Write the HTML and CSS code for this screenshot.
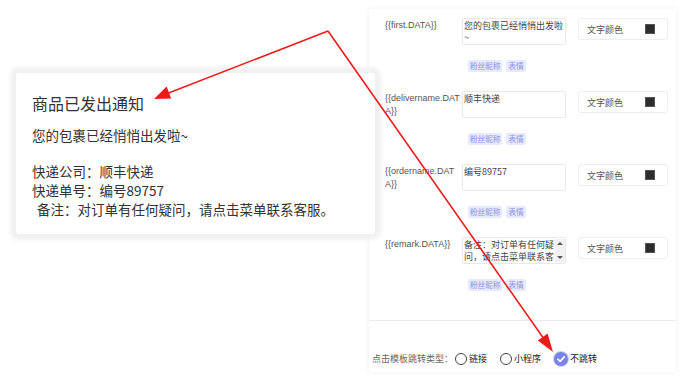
FILE: index.html
```html
<!DOCTYPE html>
<html lang="zh-CN">
<head>
<meta charset="utf-8">
<title>模板消息</title>
<link rel="stylesheet" href="styles.css">
</head>
<body>
<div class="stage">
  <div class="panel">
    <div class="rows">
      <div class="row">
        <div class="label">{{first.DATA}}</div>
        <div class="field">
          <div class="ta">您的包裹已经悄悄出发啦~</div>
          <div class="tags"><span class="tag">粉丝昵称</span><span class="tag">表情</span></div>
        </div>
        <div class="color"><span>文字颜色</span><i class="sw"></i></div>
      </div>
      <div class="row">
        <div class="label">{{delivername.DATA}}</div>
        <div class="field">
          <div class="ta">顺丰快递</div>
          <div class="tags"><span class="tag">粉丝昵称</span><span class="tag">表情</span></div>
        </div>
        <div class="color"><span>文字颜色</span><i class="sw"></i></div>
      </div>
      <div class="row">
        <div class="label">{{ordername.DATA}}</div>
        <div class="field">
          <div class="ta">编号89757</div>
          <div class="tags"><span class="tag">粉丝昵称</span><span class="tag">表情</span></div>
        </div>
        <div class="color"><span>文字颜色</span><i class="sw"></i></div>
      </div>
      <div class="row">
        <div class="label">{{remark.DATA}}</div>
        <div class="field">
          <div class="ta ta-scroll">
            <div class="ta-text">备注：对订单有任何疑问，请点击菜单联系客服。</div>
            <div class="sbar"><span class="up"></span><span class="down"></span></div>
          </div>
          <div class="tags"><span class="tag">粉丝昵称</span><span class="tag">表情</span></div>
        </div>
        <div class="color"><span>文字颜色</span><i class="sw"></i></div>
      </div>
    </div>
    <div class="footer">
      <span class="ftitle">点击模板跳转类型：</span>
      <label class="radio"><i class="dot"></i>链接</label>
      <label class="radio"><i class="dot"></i>小程序</label>
      <label class="radio on"><i class="dot"><svg viewBox="0 0 14 14" width="14" height="14"><path d="M3.8 7.2 L6.1 9.4 L10.3 4.9" fill="none" stroke="#fff" stroke-width="1.6" stroke-linecap="round" stroke-linejoin="round"/></svg></i>不跳转</label>
    </div>
  </div>

  <div class="card">
    <h1 class="ctitle">商品已发出通知</h1>
    <p class="cfirst">您的包裹已经悄悄出发啦~</p>
    <div class="cbody">
      <div>快递公司：<span class="val">顺丰快递</span></div>
      <div>快递单号：<span class="val">编号89757</span></div>
      <div class="remark">备注：对订单有任何疑问，请点击菜单联系客服。</div>
    </div>
  </div>

  <svg class="arrows" viewBox="0 0 700 379" width="700" height="379">
    <line x1="328" y1="31" x2="166" y2="94" stroke="#ee1b1b" stroke-width="1.6"/>
    <polygon points="154,99 171.2,98.4 166.6,86.6" fill="#ee1b1b"/>
    <line x1="328" y1="31" x2="544" y2="339" stroke="#ee1b1b" stroke-width="1.6"/>
    <polygon points="553,352 547.6,333.6 537.8,340.6" fill="#ee1b1b"/>
  </svg>
</div>
</body>
</html>
```

FILE: styles.css
```css
* { box-sizing: border-box; }
html, body { margin: 0; padding: 0; background: #fff; }
body {
  font-family: "Liberation Sans", "Noto Sans CJK SC", sans-serif;
  color: #333;
}
.stage {
  position: relative;
  width: 700px;
  height: 379px;
  overflow: hidden;
  padding: 9px 0 0 369px;
}
.panel {
  width: 307px;
  height: 363px;
  background: #fff;
  box-shadow: 0 0 5px rgba(0,0,0,0.08);
  display: flex;
  flex-direction: column;
}
.rows {
  padding: 9px 0 0 16px;
  height: 312px;
  border-bottom: 1px solid #ececec;
}
.row {
  display: grid;
  grid-template-columns: 77px 104px 90px;
  column-gap: 0;
  align-items: start;
  height: 73px;
}
.label {
  font-size: 9px;
  line-height: 13px;
  color: #555;
  padding: 1px 2px 0 0;
  word-break: break-all;
}
.ta {
  height: 27px;
  border: 1px solid #e9e9e9;
  border-radius: 2px;
  padding: 1px 2px 1px 1px;
  font-family: "Noto Sans CJK SC", sans-serif;
  font-size: 9px;
  line-height: 12px;
  color: #444;
  overflow: hidden;
}
.ta-scroll {
  display: flex;
  padding-right: 0;
}
.ta-text { flex: 1; overflow: hidden; }
.sbar {
  width: 10px;
  background: #f1f1f1;
  display: flex;
  flex-direction: column;
  justify-content: space-between;
  align-items: center;
  padding: 3px 0;
}
.sbar .up, .sbar .down {
  width: 0; height: 0;
  border-left: 3px solid transparent;
  border-right: 3px solid transparent;
}
.sbar .up { border-bottom: 3px solid #555; }
.sbar .down { border-top: 3px solid #555; }
.tags {
  margin: 15px 0 0 6px;
  display: flex;
  gap: 4px;
}
.tag {
  height: 12px;
  line-height: 12px;
  padding: 0 2px;
  font-family: "Noto Sans CJK SC", sans-serif;
  font-size: 7.6px;
  color: #8d94e6;
  background: #e7e9fd;
  border-radius: 2px;
}
.color {
  width: 90px;
  margin-left: 12px;
  height: 22px;
  border: 1px solid #eeeeee;
  border-radius: 3px;
  display: flex;
  align-items: center;
  justify-content: space-between;
  padding: 0 12px 0 8px;
  font-family: "Noto Sans CJK SC", sans-serif;
  font-size: 9px;
  color: #555;
}
.sw {
  display: block;
  width: 10px;
  height: 10px;
  background: #2d2d2d;
  border: 1px solid #555;
}
.footer {
  flex: 1;
  display: flex;
  align-items: center;
  padding: 24px 0 0 3px;
  font-family: "Noto Sans CJK SC", sans-serif;
  font-size: 9px;
}
.ftitle { color: #666; margin-right: 2px; }
.radio {
  display: flex;
  align-items: center;
  gap: 2px;
  color: #222;
  margin-right: 13px;
}
.dot {
  display: block;
  width: 12px;
  height: 12px;
  border: 1px solid #444;
  border-radius: 50%;
}
.radio.on .dot {
  width: 14px;
  height: 14px;
  border: none;
  background: #7a83e2;
  box-shadow: 0 0 0 1px #c9cdf5;
}
.radio.on .dot svg { display: block; }

.card {
  position: absolute;
  left: 16px;
  top: 73px;
  width: 359px;
  height: 161px;
  background: #fff;
  border-radius: 3px;
  box-shadow: 0 0 4px 6px #f1f1f1;
  padding: 19px 16px 0 16px;
  font-family: "Noto Sans CJK SC", sans-serif;
  color: #333;
}
.ctitle {
  margin: 0;
  font-weight: normal;
  font-size: 16px;
  line-height: 22px;
}
.cfirst {
  margin: 12px 0 0;
  font-size: 13.5px;
  line-height: 19px;
}
.cbody {
  margin-top: 17px;
  font-size: 13.5px;
  line-height: 19px;
}
.val { color: #333; }
.remark { padding-left: 5px; }
.arrows {
  position: absolute;
  left: 0;
  top: 0;
  pointer-events: none;
}
```
